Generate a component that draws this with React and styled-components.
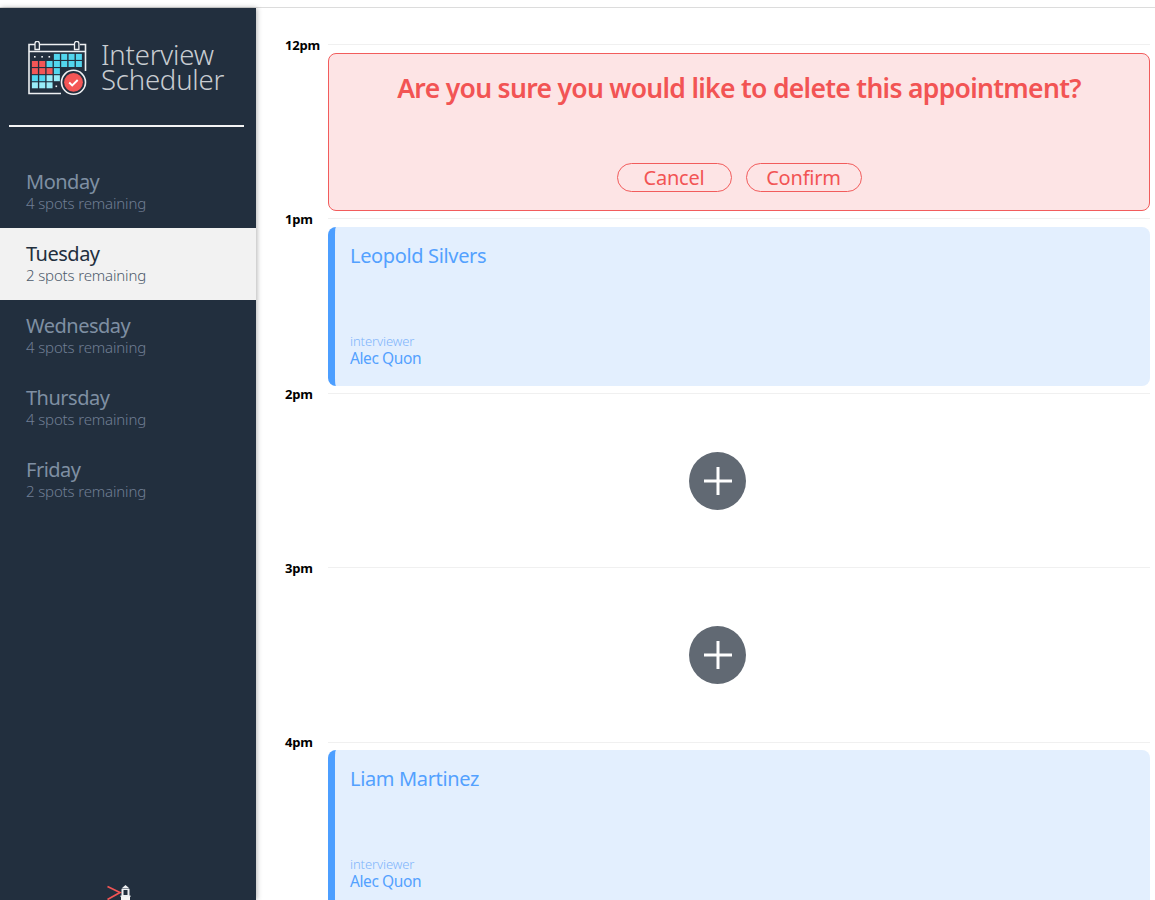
import React from "react";
import styled, { createGlobalStyle } from "styled-components";

const Global = createGlobalStyle`
  html, body {
    margin: 0;
    height: 900px;
    overflow: hidden;
    background: #fff;
    font-family: "Noto Sans", "Open Sans", sans-serif;
  }
  * { box-sizing: border-box; }
`;

const Layout = styled.main`
  display: flex;
  height: 893px;
  margin-top: 7px;
  border-top: 1px solid #dcdcdc;
`;

const Sidebar = styled.section`
  width: 256px;
  flex: none;
  background: #222f3e;
  box-shadow: 1px 0 5px rgba(0, 0, 0, 0.3);
  display: flex;
  flex-direction: column;
  overflow: hidden;
`;

const Brand = styled.div`
  display: flex;
  align-items: center;
  gap: 13px;
  height: 117px;
  padding: 4px 0 0 28px;
`;

const BrandText = styled.div`
  margin-bottom: 3px;
  font-weight: 300;
  font-size: 27.5px;
  line-height: 25px;
  letter-spacing: -0.2px;
  color: #c8ccd1;
`;

const Rule = styled.hr`
  width: 235px;
  height: 2px;
  margin: 0 0 0 9px;
  border: 0;
  background: #f4f4f4;
`;

const Nav = styled.ul`
  list-style: none;
  margin: 29px 0 0;
  padding: 0;
`;

const Day = styled.li`
  height: 72px;
  padding: 13px 0 0 26px;
  background: ${(p) => (p.$selected ? "#f2f2f2" : "transparent")};
`;

const DayName = styled.h2`
  margin: 0;
  font-weight: 400;
  font-size: 20px;
  line-height: 25px;
  letter-spacing: -0.5px;
  color: ${(p) => (p.$selected ? "#222f3e" : "#7f8fa3")};
`;

const Spots = styled.h3`
  margin: 0;
  font-weight: 300;
  font-size: 15px;
  line-height: 18px;
  letter-spacing: -0.15px;
  color: ${(p) => (p.$selected ? "#4d5a6b" : "#707e94")};
`;

const Footer = styled.div`
  margin: 369px 0 0 107px;
  line-height: 0;
`;

const Schedule = styled.section`
  flex: 1;
  padding-top: 36px;
  overflow: hidden;
`;

const Slot = styled.article`
  display: flex;
  height: 174.4px;
`;

const Time = styled.h4`
  width: 72px;
  flex: none;
  margin: -8.1px 0 0;
  padding-left: 29px;
  font-weight: 700;
  font-size: 13px;
  line-height: 18px;
  letter-spacing: -0.2px;
  color: #000;
`;

const SlotBody = styled.div`
  flex: 1;
  margin-right: 5px;
  border-top: 1px solid #f0f0f0;
  padding-top: 7.6px;
`;

const Confirm = styled.div`
  height: 158px;
  padding-top: 15px;
  background: #fde4e5;
  border: 1px solid #f25c5c;
  border-radius: 8px;
  color: #f25454;
  text-align: center;
`;

const ConfirmTitle = styled.h1`
  margin: 0;
  font-weight: 600;
  font-size: 26.5px;
  line-height: 38px;
  letter-spacing: -0.69px;
`;

const Actions = styled.div`
  display: flex;
  justify-content: center;
  gap: 14px;
  margin-top: 56px;
`;

const Pill = styled.button`
  width: ${(p) => p.$width}px;
  height: 29px;
  padding: 0;
  background: transparent;
  border: 1px solid #f25c5c;
  border-radius: 15px;
  font: 400 20px/25px "Noto Sans", sans-serif;
  letter-spacing: -0.2px;
  color: #f25454;
`;

const Card = styled.div`
  height: 159px;
  padding: 14px 0 0 15px;
  background: #e3effe;
  border-left: 7px solid #4c9eff;
  border-radius: 8px;
  color: #53a1ff;
`;

const Student = styled.h2`
  margin: 0;
  font-weight: 400;
  font-size: 20px;
  line-height: 30px;
  letter-spacing: -0.35px;
`;

const Caption = styled.div`
  margin-top: 62px;
  font-weight: 300;
  font-size: 13px;
  line-height: 16px;
  letter-spacing: -0.1px;
  color: #7fb5fb;
`;

const Interviewer = styled.div`
  font-weight: 400;
  font-size: 15.5px;
  line-height: 18px;
  letter-spacing: -0.4px;
`;

const AddRow = styled.div`
  display: flex;
  justify-content: center;
  padding: 50.4px 0 0 0;
  margin-right: 43px;
`;

const AddButton = styled.button`
  width: 57px;
  height: 58px;
  padding: 0;
  border: 0;
  border-radius: 50%;
  background: #616973;
  display: flex;
  align-items: center;
  justify-content: center;
`;

const CYAN = "#52d6ee";
const PALE = "#98ecf8";
const RED = "#f45656";

const CELLS = [
  [null, null, null, CYAN, CYAN, CYAN, CYAN],
  [RED, RED, CYAN, CYAN, CYAN, CYAN, CYAN],
  [RED, RED, RED, CYAN],
  [CYAN, CYAN, PALE, PALE],
  [PALE, PALE, PALE],
];

function Logo() {
  return (
    <svg width="60" height="55" viewBox="0 0 60 55" fill="none">
      <path
        d="M7 3.5H1V52.5H33M12 3.5H46M52 3.5H57.5V30M1 10.5H57.5"
        stroke="#eef0f2"
        strokeWidth="1.6"
      />
      <path d="M7 8.5V2.5a2.2 2.2 0 0 1 4.4 0v6z" fill="#222f3e" stroke="#eef0f2" strokeWidth="1.3" />
      <path d="M46.5 8.5V2.5a2.2 2.2 0 0 1 4.4 0v6z" fill="#222f3e" stroke="#eef0f2" strokeWidth="1.3" />
      {[4.5, 11.8, 19].map((x) => (
        <rect key={x} x={x + 1.5} y="15" width="1.6" height="1.6" fill="#eef0f2" />
      ))}
      <rect x="27.5" y="44.5" width="1.6" height="1.6" fill="#eef0f2" />
      {CELLS.map((row, r) =>
        row.map((color, c) =>
          color ? (
            <rect
              key={`${r}-${c}`}
              x={3.9 + c * 7.33}
              y={12.9 + r * 7.1}
              width="6"
              height="6"
              fill={color}
            />
          ) : null
        )
      )}
      <circle cx="45.5" cy="41.3" r="12" fill="#222f3e" stroke="#eef0f2" strokeWidth="1.6" />
      <circle cx="45.5" cy="41.3" r="9.4" fill={RED} />
      <path d="M41.2 41.5l3 3 5.5-5.5" stroke="#fff" strokeWidth="1.9" />
    </svg>
  );
}

function Lighthouse() {
  return (
    <svg width="26" height="15" viewBox="0 0 26 15" fill="none">
      <path d="M0.5 1.5L13 7.5L0.5 14.5" stroke="#f25555" strokeWidth="1.7" />
      <path d="M14.5 3.5L18.5 0L22.5 3.5z" fill="#eef0f2" />
      <rect x="14.5" y="4" width="8" height="7" fill="#eef0f2" />
      <rect x="16.5" y="5" width="4" height="5" fill="#222f3e" />
      <rect x="13.5" y="10.5" width="10" height="1.5" fill="#eef0f2" />
      <rect x="14" y="12" width="9" height="3" fill="#f6f6f6" />
    </svg>
  );
}

const DAYS = [
  { name: "Monday", spots: 4 },
  { name: "Tuesday", spots: 2, selected: true },
  { name: "Wednesday", spots: 4 },
  { name: "Thursday", spots: 4 },
  { name: "Friday", spots: 2 },
];

function Booked({ student }) {
  return (
    <Card>
      <Student>{student}</Student>
      <Caption>interviewer</Caption>
      <Interviewer>Alec Quon</Interviewer>
    </Card>
  );
}

function Empty() {
  return (
    <AddRow>
      <AddButton aria-label="Add">
        <svg width="30" height="30" viewBox="0 0 30 30">
          <path d="M15 1V29M1 15H29" stroke="#fff" strokeWidth="3" />
        </svg>
      </AddButton>
    </AddRow>
  );
}

export default function App() {
  return (
    <Layout>
      <Global />
      <Sidebar>
        <Brand>
          <Logo />
          <BrandText>
            Interview
            <br />
            Scheduler
          </BrandText>
        </Brand>
        <Rule />
        <Nav>
          {DAYS.map((d) => (
            <Day key={d.name} $selected={d.selected}>
              <DayName $selected={d.selected}>{d.name}</DayName>
              <Spots $selected={d.selected}>{d.spots} spots remaining</Spots>
            </Day>
          ))}
        </Nav>
        <Footer>
          <Lighthouse />
        </Footer>
      </Sidebar>
      <Schedule>
        <Slot>
          <Time>12pm</Time>
          <SlotBody>
            <Confirm>
              <ConfirmTitle>Are you sure you would like to delete this appointment?</ConfirmTitle>
              <Actions>
                <Pill $width={115}>Cancel</Pill>
                <Pill $width={116}>Confirm</Pill>
              </Actions>
            </Confirm>
          </SlotBody>
        </Slot>
        <Slot>
          <Time>1pm</Time>
          <SlotBody>
            <Booked student="Leopold Silvers" />
          </SlotBody>
        </Slot>
        <Slot>
          <Time>2pm</Time>
          <SlotBody>
            <Empty />
          </SlotBody>
        </Slot>
        <Slot>
          <Time>3pm</Time>
          <SlotBody>
            <Empty />
          </SlotBody>
        </Slot>
        <Slot>
          <Time>4pm</Time>
          <SlotBody>
            <Booked student="Liam Martinez" />
          </SlotBody>
        </Slot>
      </Schedule>
    </Layout>
  );
}
